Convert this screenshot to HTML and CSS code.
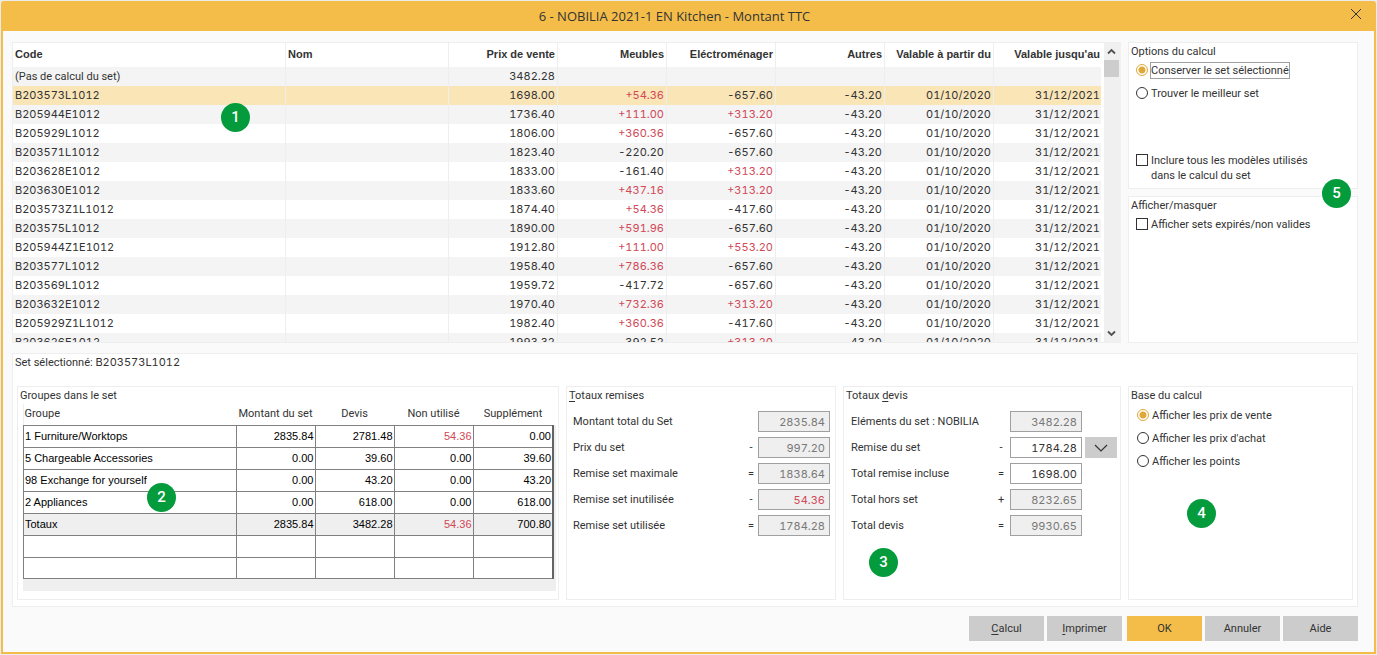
FILE: index.html
```html
<!DOCTYPE html>
<html lang="fr">
<head>
<meta charset="utf-8">
<title>6 - NOBILIA 2021-1 EN Kitchen - Montant TTC</title>
<link rel="stylesheet" href="styles.css">
</head>
<body>
<div class="window">
  <header class="titlebar">
    <h1 class="title">6 - NOBILIA 2021-1 EN Kitchen - Montant TTC</h1>
    <button class="close" type="button" aria-label="Fermer">
      <svg width="12" height="12" viewBox="0 0 12 12"><path d="M1 1l10 10M11 1L1 11" fill="none" stroke="#333" stroke-width="1"/></svg>
    </button>
  </header>
  <main class="content">
    <div class="top">
      <section class="list">
        <div class="list-body">
          <table class="sets">
            <colgroup><col class="c-code"><col><col class="c-num"><col class="c-num"><col class="c-num"><col class="c-num"><col class="c-num"><col class="c-last"></colgroup>
            <thead>
              <tr><th>Code</th><th>Nom</th><th>Prix de vente</th><th>Meubles</th><th>Eléctroménager</th><th>Autres</th><th>Valable à partir du</th><th>Valable jusqu'au</th></tr>
            </thead>
            <tbody>
              <tr><td class="plain">(Pas de calcul du set)</td><td></td><td>3482.28</td><td></td><td></td><td></td><td></td><td></td></tr>
              <tr class="selected"><td>B203573L1012</td><td></td><td>1698.00</td><td class="plus">+54.36</td><td>-657.60</td><td>-43.20</td><td>01/10/2020</td><td>31/12/2021</td></tr>
              <tr><td>B205944E1012</td><td></td><td>1736.40</td><td class="plus">+111.00</td><td class="plus">+313.20</td><td>-43.20</td><td>01/10/2020</td><td>31/12/2021</td></tr>
              <tr><td>B205929L1012</td><td></td><td>1806.00</td><td class="plus">+360.36</td><td>-657.60</td><td>-43.20</td><td>01/10/2020</td><td>31/12/2021</td></tr>
              <tr><td>B203571L1012</td><td></td><td>1823.40</td><td>-220.20</td><td>-657.60</td><td>-43.20</td><td>01/10/2020</td><td>31/12/2021</td></tr>
              <tr><td>B203628E1012</td><td></td><td>1833.00</td><td>-161.40</td><td class="plus">+313.20</td><td>-43.20</td><td>01/10/2020</td><td>31/12/2021</td></tr>
              <tr><td>B203630E1012</td><td></td><td>1833.60</td><td class="plus">+437.16</td><td class="plus">+313.20</td><td>-43.20</td><td>01/10/2020</td><td>31/12/2021</td></tr>
              <tr><td>B203573Z1L1012</td><td></td><td>1874.40</td><td class="plus">+54.36</td><td>-417.60</td><td>-43.20</td><td>01/10/2020</td><td>31/12/2021</td></tr>
              <tr><td>B203575L1012</td><td></td><td>1890.00</td><td class="plus">+591.96</td><td>-657.60</td><td>-43.20</td><td>01/10/2020</td><td>31/12/2021</td></tr>
              <tr><td>B205944Z1E1012</td><td></td><td>1912.80</td><td class="plus">+111.00</td><td class="plus">+553.20</td><td>-43.20</td><td>01/10/2020</td><td>31/12/2021</td></tr>
              <tr><td>B203577L1012</td><td></td><td>1958.40</td><td class="plus">+786.36</td><td>-657.60</td><td>-43.20</td><td>01/10/2020</td><td>31/12/2021</td></tr>
              <tr><td>B203569L1012</td><td></td><td>1959.72</td><td>-417.72</td><td>-657.60</td><td>-43.20</td><td>01/10/2020</td><td>31/12/2021</td></tr>
              <tr><td>B203632E1012</td><td></td><td>1970.40</td><td class="plus">+732.36</td><td class="plus">+313.20</td><td>-43.20</td><td>01/10/2020</td><td>31/12/2021</td></tr>
              <tr><td>B205929Z1L1012</td><td></td><td>1982.40</td><td class="plus">+360.36</td><td>-417.60</td><td>-43.20</td><td>01/10/2020</td><td>31/12/2021</td></tr>
              <tr><td>B203626E1012</td><td></td><td>1993.32</td><td>-392.52</td><td class="plus">+313.20</td><td>-43.20</td><td>01/10/2020</td><td>31/12/2021</td></tr>
            </tbody>
          </table>
        </div>
        <div class="scrollbar">
          <button class="arrow" type="button" aria-label="Défiler vers le haut"><svg width="9" height="7" viewBox="0 0 9 7"><path d="M1 5.5L4.500 2L8 5.500" fill="none" stroke="#505050" stroke-width="1.8"/></svg></button>
          <div class="thumb"></div>
          <button class="arrow arrow-down" type="button" aria-label="Défiler vers le bas"><svg width="9" height="7" viewBox="0 0 9 7"><path d="M1 1.500L4.500 5L8 1.500" fill="none" stroke="#505050" stroke-width="1.8"/></svg></button>
        </div>
        <span class="pin pin-list">1</span>
      </section>
      <aside class="side">
        <section class="panel">
          <h2 class="legend">Options du calcul</h2>
          <div class="choices">
            <label class="choice"><input type="radio" name="mode" checked><span class="focused">Conserver le set sélectionné</span></label>
            <label class="choice"><input type="radio" name="mode"><span>Trouver le meilleur set</span></label>
          </div>
          <label class="choice include"><input type="checkbox"><span>Inclure tous les modèles utilisés<br>dans le calcul du set</span></label>
          <span class="pin pin-side">5</span>
        </section>
        <section class="panel">
          <h2 class="legend">Afficher/masquer</h2>
          <div class="choices"><label class="choice"><input type="checkbox"><span>Afficher sets expirés/non valides</span></label></div>
        </section>
      </aside>
    </div>

    <section class="panel details">
      <h2 class="legend">Set sélectionné: <span class="num">B203573L1012</span></h2>
      <div class="groups">
        <section class="panel">
          <h3 class="legend">Groupes dans le set</h3>
          <div class="grid-box">
            <table class="grid">
              <colgroup><col><col class="g-num"><col class="g-num"><col class="g-num"><col class="g-last"></colgroup>
              <thead><tr><th>Groupe</th><th>Montant du set</th><th>Devis</th><th>Non utilisé</th><th>Supplément</th></tr></thead>
              <tbody>
                <tr><td>1 Furniture/Worktops</td><td>2835.84</td><td>2781.48</td><td class="plus">54.36</td><td>0.00</td></tr>
                <tr><td>5 Chargeable Accessories</td><td>0.00</td><td>39.60</td><td>0.00</td><td>39.60</td></tr>
                <tr><td>98 Exchange for yourself</td><td>0.00</td><td>43.20</td><td>0.00</td><td>43.20</td></tr>
                <tr><td>2 Appliances</td><td>0.00</td><td>618.00</td><td>0.00</td><td>618.00</td></tr>
                <tr class="total"><td>Totaux</td><td>2835.84</td><td>3482.28</td><td class="plus">54.36</td><td>700.80</td></tr>
                <tr><td></td><td></td><td></td><td></td><td></td></tr>
                <tr><td></td><td></td><td></td><td></td><td></td></tr>
              </tbody>
            </table>
          </div>
          <span class="pin pin-groups">2</span>
        </section>
        <section class="panel">
          <h3 class="legend"><u>T</u>otaux remises</h3>
          <div class="fields">
            <label for="r1">Montant total du Set</label><span></span><input id="r1" value="2835.84" disabled>
            <label for="r2">Prix du set</label><span>-</span><input id="r2" value="997.20" disabled>
            <label for="r3">Remise set maximale</label><span>=</span><input id="r3" value="1838.64" disabled>
            <label for="r4">Remise set inutilisée</label><span>-</span><input id="r4" class="plus" value="54.36" disabled>
            <label for="r5">Remise set utilisée</label><span>=</span><input id="r5" value="1784.28" disabled>
          </div>
        </section>
        <section class="panel">
          <h3 class="legend">Totaux <u>d</u>evis</h3>
          <div class="fields fields-quote">
            <label for="d1">Eléments du set : NOBILIA</label><span></span><input id="d1" value="3482.28" disabled><i></i>
            <label for="d2">Remise du set</label><span>-</span><input id="d2" value="1784.28"><button class="drop" type="button" aria-label="Choisir la remise"><svg width="14" height="8" viewBox="0 0 14 8"><path d="M1 1l6 6l6-6" fill="none" stroke="#333" stroke-width="1.200"/></svg></button>
            <label for="d3">Total remise incluse</label><span>=</span><input id="d3" value="1698.00"><i></i>
            <label for="d4">Total hors set</label><span>+</span><input id="d4" value="8232.65" disabled><i></i>
            <label for="d5">Total devis</label><span>=</span><input id="d5" value="9930.65" disabled><i></i>
          </div>
          <span class="pin pin-quote">3</span>
        </section>
        <section class="panel">
          <h3 class="legend">Base du calcul</h3>
          <div class="choices">
            <label class="choice"><input type="radio" name="base" checked><span>Afficher les prix de vente</span></label>
            <label class="choice"><input type="radio" name="base"><span>Afficher les prix d'achat</span></label>
            <label class="choice"><input type="radio" name="base"><span>Afficher les points</span></label>
          </div>
          <span class="pin pin-base">4</span>
        </section>
      </div>
    </section>

    <footer class="actions">
      <div class="action-group">
        <button class="btn" type="button"><u>C</u>alcul</button>
        <button class="btn" type="button"><u>I</u>mprimer</button>
      </div>
      <div class="action-group">
        <button class="btn primary" type="button">OK</button>
        <button class="btn" type="button">Annuler</button>
        <button class="btn" type="button">Aide</button>
      </div>
    </footer>
  </main>
</div>
</body>
</html>
```
FILE: styles.css
```css
* { box-sizing: border-box; }

body {
  margin: 0;
  background: #ececec;
  color: #333;
  font: 11px/15px Roboto, "Liberation Sans", sans-serif;
}

h1, h2, h3 { margin: 0; font-weight: 400; }
button, input { font: inherit; color: inherit; }
button { border: 0; padding: 0; display: grid; place-items: center; }
u { text-underline-offset: 2px; }

.num, .sets td, .fields input {
  font-family: Inter, Roboto, sans-serif;
  font-variant-numeric: tabular-nums;
}
.sets .plain { font-family: Roboto, sans-serif; }

.window {
  height: 100vh;
  min-height: 600px;
  padding: 1px;
  display: flex;
  flex-direction: column;
}

.titlebar {
  position: relative;
  height: 30px;
  flex: none;
  display: flex;
  align-items: center;
  justify-content: center;
  padding-right: 28px;
  background: #f4bd4a;
  border-radius: 3px 3px 0 0;
}
.title { font: 400 13px/20px "Open Sans", Roboto, sans-serif; }
.close {
  position: absolute;
  top: 7px;
  right: 14px;
  background: none;
}

.content {
  flex: 1;
  min-height: 0;
  display: flex;
  flex-direction: column;
  padding: 11px 16px 11px 9px;
  background: #fafafa;
  border: 2px solid #f4bd4a;
  border-top: 0;
}

.top {
  flex: 1;
  min-height: 0;
  display: grid;
  grid-template-columns: 1fr 230px;
  grid-template-rows: minmax(0, 1fr);
  gap: 7px;
}

.list {
  position: relative;
  display: flex;
  background: #fff;
  border: 1px solid #eee;
  border-right: 0;
}
.list-body { flex: 1; min-width: 0; overflow: hidden; padding-right: 3px; }

.sets { width: 100%; table-layout: fixed; border-collapse: separate; border-spacing: 0; }
.c-code { width: 273px; }
.c-num { width: 109px; }
.c-last { width: 107px; }
.sets th, .sets td {
  height: 19px;
  padding: 0 2px;
  text-align: right;
  white-space: nowrap;
  border-right: 1px solid #eee;
}
.sets th { height: 24px; padding-bottom: 2px; font-weight: 700; font-family: "Liberation Sans", Arial, sans-serif; }
.sets th:nth-child(-n+2), .sets td:nth-child(-n+2) { text-align: left; }
.sets th:last-child, .sets td:last-child { border-right: 0; padding-right: 1px; }
.sets tbody tr:nth-child(odd) { background: #f4f4f4; }
.sets tbody .selected { background: #fae5b7; }
.plus, .sets .plus, .fields .plus:disabled { color: #d14857; }

.scrollbar {
  width: 17px;
  display: flex;
  flex-direction: column;
  padding-right: 2px;
  background: #f0f0f0;
}
.arrow { height: 17px; background: none; }
.arrow-down { margin-top: auto; }
.thumb { height: 17px; background: #cdcdcd; }

.side { display: grid; grid-template-rows: 1fr 1fr; gap: 7px; }

.panel {
  position: relative;
  background: #fff;
  border: 1px solid #eee;
}
.legend { font-size: 11px; line-height: 17px; padding-left: 2px; }

.choices { display: grid; gap: 8px; padding: 3px 0 0 7px; }
.choice { display: flex; align-items: flex-start; gap: 3px; }
.choice input {
  appearance: none;
  width: 12px;
  height: 12px;
  margin: 1px 0 0;
  flex: none;
  background: #fff;
  border: 1px solid #333;
}
.choice input[type="radio"] { border-radius: 50%; }
.choice input[type="radio"]:checked {
  border-color: #dfa93a;
  background: radial-gradient(circle, #dfa93a 3px, #fff 4px);
}
.focused { outline: 1px solid #a0a0a0; }
.include { padding: 52px 0 0 7px; }

.details { flex: none; margin-top: 10px; padding: 0 4px 6px; }
.details > .legend { margin: 0 0 15px -4px; }
.groups {
  display: grid;
  grid-template-columns: 1fr 270px 278px 225px;
  gap: 7px;
}
.groups .panel { min-height: 214px; }
.groups .choices { padding: 4px 0 0 8px; }

.grid-box {
  margin: 0 2px 0 5px;
  padding: 0 2px 12px 0;
  background: #efefef;
}
.grid {
  width: 100%;
  table-layout: fixed;
  border-collapse: collapse;
  font-family: "Liberation Sans", Arial, sans-serif;
  color: #000;
}
.g-num { width: 79px; }
.g-last { width: 80px; }
.grid thead { font-family: Roboto, sans-serif; color: #333; }
.grid th {
  height: 21px;
  padding: 0 1px 1px;
  background: #fff;
  font-weight: 400;
}
.grid th:first-child { text-align: left; }
.grid th:last-child { box-shadow: 3px 0 #fff; }
.grid tbody { border: 1px solid #646464; border-right-width: 2px; background: #fff; }
.grid td {
  height: 22px;
  padding: 0 1px;
  border: 1px solid #808080;
  text-align: right;
}
.grid td:first-child { text-align: left; }
.grid tbody td:last-child { border-right: 2px solid #646464; }
.grid tr:last-child td { height: 21px; }
.grid .total { background: #efefef; }

.fields {
  display: grid;
  grid-template-columns: 1fr 14px 72px;
  gap: 5px 0;
  align-items: center;
  padding: 7px 5px 0 6px;
}
.fields-quote { grid-template-columns: 1fr 18px 72px 35px; padding: 7px 3px 0 7px; }
.fields span { text-align: center; }
.fields input {
  width: 72px;
  height: 21px;
  padding: 1px 4px 0;
  background: #fff;
  border: 1px solid #a0a0a0;
  border-radius: 0;
  text-align: right;
}
.fields input:disabled { background: #efefef; color: #787878; }
.fields .plus:disabled { color: #d14857; }
.drop { width: 32px; height: 21px; margin-left: 3px; background: #ccc; }

.actions { flex: none; display: flex; justify-content: flex-end; gap: 5px; margin-top: 9px; }
.action-group { display: flex; gap: 3px; }
.btn { display: block; width: 75px; height: 25px; background: #ccc; text-align: center; }
.primary { background: #f4bd4a; }

.pin {
  position: absolute;
  width: 29px;
  height: 29px;
  border-radius: 50%;
  background: #049b3c;
  color: #fff;
  font: 500 15px/29px Roboto, sans-serif;
  text-align: center;
}
.pin-list { left: 208px; top: 60px; }
.pin-side { right: 6px; bottom: -20px; z-index: 1; }
.pin-groups { left: 129px; top: 96px; }
.pin-quote { left: 25px; top: 161px; }
.pin-base { left: 58px; top: 112px; }
```
